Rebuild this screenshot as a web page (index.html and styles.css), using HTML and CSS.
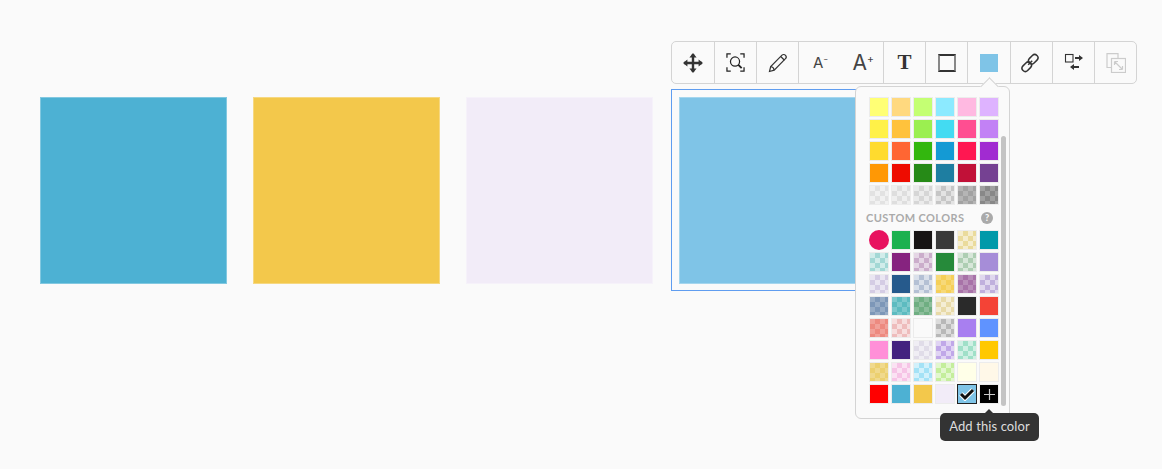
FILE: index.html
```html
<!DOCTYPE html>
<html lang="en">
<head>
<meta charset="utf-8">
<title>Color picker</title>
<link rel="stylesheet" href="styles.css">
</head>
<body>
<div class="toolbar">
  <button class="tool"><svg width="22" height="22" viewBox="0 0 22 22"><path d="M11 2v18M2 11h18" stroke="#333" stroke-width="2.400" fill="none"/><path d="M11 1l3.600 4.400H7.400zM11 21l3.600-4.400H7.400zM1 11l4.400-3.600v7.200zM21 11l-4.400-3.600v7.200z" fill="#333"/></svg></button>
  <button class="tool"><svg width="19" height="19" viewBox="0 0 20 20" fill="none" stroke="#222" stroke-width="1.300"><path d="M1 5V1h4M15 1h4v4M19 15v4h-4M5 19H1v-4"/><circle cx="9.500" cy="9" r="4.800"/><path d="M13 12.500l3.500 3.500" stroke-width="2"/></svg></button>
  <button class="tool"><svg width="20" height="20" viewBox="0 0 20 20" fill="none" stroke="#333" stroke-width="1.200"><path d="M1.500 18.500l1.200-5L14 2.200c1-1 2.600-.9 3.500.1s1 2.400 0 3.400L6.200 17.200z"/><path d="M2.700 13.500c1.700.2 3.200 1.700 3.500 3.700M12.700 3.500l3.800 3.700"/></svg></button>
  <div class="tool tool-wide">
    <span class="size size-small">A<sup>−</sup></span>
    <span class="size size-large">A<sup>+</sup></span>
  </div>
  <button class="tool"><span class="serif-t">T</span></button>
  <button class="tool"><span class="outline-box"></span></button>
  <button class="tool"><span class="fill-box"></span></button>
  <button class="tool"><svg class="ico-link" width="20" height="20" viewBox="0 0 20 20" fill="none" stroke="#333" stroke-width="1.500"><path d="M8.200 11.800l4-4"/><rect x="10" y="1" width="6.500" height="10.500" rx="3.200" transform="rotate(45 13.250 6.250)"/><rect x="3.500" y="8.500" width="6.500" height="10.500" rx="3.200" transform="rotate(45 6.750 13.750)"/></svg></button>
  <button class="tool"><svg width="20" height="20" viewBox="0 0 20 20"><rect x="1.500" y="1.500" width="7.500" height="7.500" fill="none" stroke="#333" stroke-width="1.100"/><path d="M11 5h5" stroke="#333" stroke-width="2"/><path d="M15 2l4 3-4 3zM6 14l4-3v6z" fill="#333"/><path d="M9 14h6" stroke="#333" stroke-width="2"/></svg></button>
  <button class="tool"><svg width="20" height="20" viewBox="0 0 20 20" fill="none" stroke="#ccc" stroke-width="1.200"><path d="M6 14.500H1V.6h11v5"/><rect x="5.500" y="5.500" width="14" height="14" fill="#fafafa"/><path d="M8.500 8.500l8 8M8.500 8.500h3.500M8.500 8.500V12M16.500 16.500H13M16.500 16.500V13"/></svg></button>
</div>

<div class="cards">
  <div class="card card-blue"></div>
  <div class="card card-yellow"></div>
  <div class="card card-lilac"></div>
  <div class="card card-sky"></div>
</div>

<div class="panel">
  <span class="panel-arrow"></span>
  <div class="swatches">
    <i class="sw" style="--c:#ffff75"></i><i class="sw" style="--c:#ffd97f"></i><i class="sw" style="--c:#c4ff73"></i><i class="sw" style="--c:#8ceaff"></i><i class="sw" style="--c:#ffb9e1"></i><i class="sw" style="--c:#deb3ff"></i>
    <i class="sw" style="--c:#fff148"></i><i class="sw" style="--c:#ffc23c"></i><i class="sw" style="--c:#9bef50"></i><i class="sw" style="--c:#43dbf2"></i><i class="sw" style="--c:#ff4e91"></i><i class="sw" style="--c:#c281f5"></i>
    <i class="sw" style="--c:#ffdb2e"></i><i class="sw" style="--c:#ff6633"></i><i class="sw" style="--c:#33b70e"></i><i class="sw" style="--c:#149ad4"></i><i class="sw" style="--c:#ff1751"></i><i class="sw" style="--c:#a12bd1"></i>
    <i class="sw" style="--c:#ff9805"></i><i class="sw" style="--c:#ee0c00"></i><i class="sw" style="--c:#268a17"></i><i class="sw" style="--c:#1e7ea1"></i><i class="sw" style="--c:#c11138"></i><i class="sw" style="--c:#754192"></i>
    <i class="sw chk" style="--c:#e2e2e2"></i><i class="sw chk" style="--c:#dedede"></i><i class="sw chk" style="--c:#d6d6d6"></i><i class="sw chk" style="--c:#c6c6c6"></i><i class="sw chk dk" style="--c:#a2a2a2"></i><i class="sw chk dk" style="--c:#888888"></i>
  </div>
  <div class="custom-head"><span>CUSTOM COLORS</span><b class="help">?</b></div>
  <div class="swatches">
    <i class="sw round" style="--c:#e8125f"></i><i class="sw" style="--c:#1cb14f"></i><i class="sw" style="--c:#171414"></i><i class="sw" style="--c:#3a3a3a"></i><i class="sw chk" style="--c:#eadb9c"></i><i class="sw" style="--c:#0099a9"></i>
    <i class="sw chk" style="--c:#a3d8d5"></i><i class="sw" style="--c:#86237f"></i><i class="sw chk" style="--c:#cbadcb"></i><i class="sw" style="--c:#268a3a"></i><i class="sw chk" style="--c:#aeceb3"></i><i class="sw" style="--c:#a68dd8"></i>
    <i class="sw chk" style="--c:#d4cce4"></i><i class="sw" style="--c:#265a8c"></i><i class="sw chk" style="--c:#b4c0d4"></i><i class="sw chk dk" style="--c:#f5cf58"></i><i class="sw chk dk" style="--c:#a873a8"></i><i class="sw chk" style="--c:#c0b0dd"></i>
    <i class="sw chk dk" style="--c:#7d97b8"></i><i class="sw chk dk" style="--c:#5dbbc0"></i><i class="sw chk dk" style="--c:#6fae82"></i><i class="sw chk" style="--c:#e8daa8"></i><i class="sw" style="--c:#2a2a2a"></i><i class="sw" style="--c:#f44336"></i>
    <i class="sw chk dk" style="--c:#ed8a80"></i><i class="sw chk" style="--c:#eebcbc"></i><i class="sw" style="--c:#fafafa"></i><i class="sw chk" style="--c:#b8b8b8"></i><i class="sw" style="--c:#a87ff0"></i><i class="sw" style="--c:#5f93ff"></i>
    <i class="sw" style="--c:#ff8fd8"></i><i class="sw" style="--c:#43237f"></i><i class="sw chk" style="--c:#e0dce8"></i><i class="sw chk" style="--c:#c0a8e8"></i><i class="sw chk" style="--c:#a0e0c8"></i><i class="sw" style="--c:#ffc800"></i>
    <i class="sw chk dk" style="--c:#ecd070"></i><i class="sw chk" style="--c:#f6c4e6"></i><i class="sw chk" style="--c:#a4e2f6"></i><i class="sw chk" style="--c:#c4ee9c"></i><i class="sw" style="--c:#ffffe8"></i><i class="sw" style="--c:#fff8e8"></i>
    <i class="sw" style="--c:#ff0000"></i><i class="sw" style="--c:#4db1d3"></i><i class="sw" style="--c:#f3c84b"></i><i class="sw" style="--c:#f2ecf8"></i>
    <i class="sw sw-current"><svg width="16" height="14" viewBox="0 0 16 14"><path d="M2 7l4 4 8-8" fill="none" stroke="#fff" stroke-width="5"/><path d="M2 7l4 4 8-8" fill="none" stroke="#111" stroke-width="3"/></svg></i>
    <i class="sw sw-add"><svg width="11" height="11" viewBox="0 0 11 11"><path d="M5.500 0v11M0 5.500h11" stroke="#ccc" stroke-width="1.200"/></svg></i>
  </div>
  <span class="scrollbar"></span>
</div>

<div class="tooltip">Add this color</div>
</body>
</html>
```
FILE: styles.css
```css
* { box-sizing: border-box; }
html, body { margin: 0; height: 100%; }
body {
  position: relative;
  background: #fafafa;
  padding-top: 41px;
  overflow: hidden;
  font-family: "Lato", "Liberation Sans", sans-serif;
}

.toolbar {
  display: flex;
  width: 466px;
  height: 43px;
  margin-left: 671px;
  border: 1px solid #d4d4d4;
  border-radius: 5px;
}
.tool {
  display: flex;
  flex: none;
  align-items: center;
  justify-content: center;
  width: 42px;
  padding: 0;
  background: none;
  border: 0;
  border-right: 1px solid #d4d4d4;
  color: #333;
  font: inherit;
}
.tool:first-child { width: 43px; }
.tool:nth-child(7) { width: 43px; }
.tool:last-child { width: 41px; border-right: 0; }
.tool-wide { width: 85px; justify-content: flex-start; }
.ico-link { margin-right: 3px; }

.size { display: block; font-family: "Inter", "Liberation Sans", sans-serif; color: #444; line-height: 1; }
.size sup { font-size: 50%; line-height: 0; vertical-align: baseline; position: relative; top: -0.75em; }
.size-small { width: 43px; padding-left: 14px; font-size: 15px; }
.size-large { width: 42px; padding-left: 11px; font-size: 21px; }

.serif-t { font: bold 21px "Liberation Serif", serif; color: #333; }
.outline-box {
  width: 18px;
  height: 18px;
  border: 2px solid #333;
  border-left-color: #888;
  border-right-color: #888;
}
.fill-box { width: 18px; height: 18px; background: #7fc4e7; }

.cards {
  display: flex;
  gap: 26px;
  margin: 13px 0 0 40px;
}
.card {
  position: relative;
  width: 187px;
  height: 187px;
  flex: none;
  box-shadow: inset 0 0 0 1px rgba(255, 255, 255, 0.3);
}
.card-blue { background: #4db1d3; }
.card-yellow { background: #f3c84b; }
.card-lilac { background: #f2ecf8; }
.card-sky { background: #7fc4e7; }
.card-sky::before {
  content: "";
  position: absolute;
  inset: -8px -8px -7px -8px;
  border: 1px solid #5f9df0;
}

.panel {
  position: absolute;
  left: 855px;
  top: 86px;
  width: 155px;
  height: 333px;
  padding: 10px 0 0 13px;
  background: #fafafa;
  border: 1px solid #d4d4d4;
  border-radius: 6px;
}
.panel-arrow {
  position: absolute;
  left: 127px;
  top: -7px;
  width: 13px;
  height: 13px;
  background: #fafafa;
  border: 1px solid #d4d4d4;
  border-right: 0;
  border-bottom: 0;
  transform: rotate(45deg);
}
.swatches {
  display: grid;
  grid-template-columns: repeat(6, 20px);
  grid-auto-rows: 20px;
  gap: 2px;
}
.sw {
  display: flex;
  align-items: center;
  justify-content: center;
  border: 1px solid #ececec;
  background: var(--c);
  background-clip: padding-box;
}
.chk {
  background-color: color-mix(in srgb, var(--c) 50%, #fff);
  background-image: conic-gradient(var(--c) 25%, transparent 0 50%, var(--c) 0 75%, transparent 0);
  background-size: 10px 10px;
  background-clip: padding-box;
}
.chk.dk { background-color: color-mix(in srgb, var(--c) 80%, #fff); }
.round { border: 0; border-radius: 50%; }
.sw-current { background: #7fc4e7; border: 1px solid #222; }
.sw-add { background: #000; }

.custom-head {
  display: flex;
  align-items: center;
  justify-content: space-between;
  width: 127px;
  height: 25px;
  margin-left: -3px;
  color: #aaa;
  font-size: 11px;
  font-weight: 700;
  letter-spacing: 0.4px;
}
.help {
  width: 12px;
  height: 12px;
  border-radius: 50%;
  background: #aaa;
  color: #fafafa;
  font-size: 9px;
  line-height: 12px;
  text-align: center;
  letter-spacing: 0;
}
.scrollbar {
  position: absolute;
  left: 145px;
  top: 49px;
  width: 5px;
  height: 270px;
  background: #c4c4c4;
  border-radius: 3px;
}

.tooltip {
  position: absolute;
  left: 940px;
  top: 413px;
  width: 99px;
  height: 28px;
  background: #333;
  border-radius: 5px;
  color: #ddd;
  font-size: 13px;
  letter-spacing: 0.1px;
  line-height: 26px;
  text-align: center;
}
.tooltip::before {
  content: "";
  position: absolute;
  left: 44px;
  top: -4px;
  border: 5px solid transparent;
  border-top: 0;
  border-bottom-color: #333;
}
```
